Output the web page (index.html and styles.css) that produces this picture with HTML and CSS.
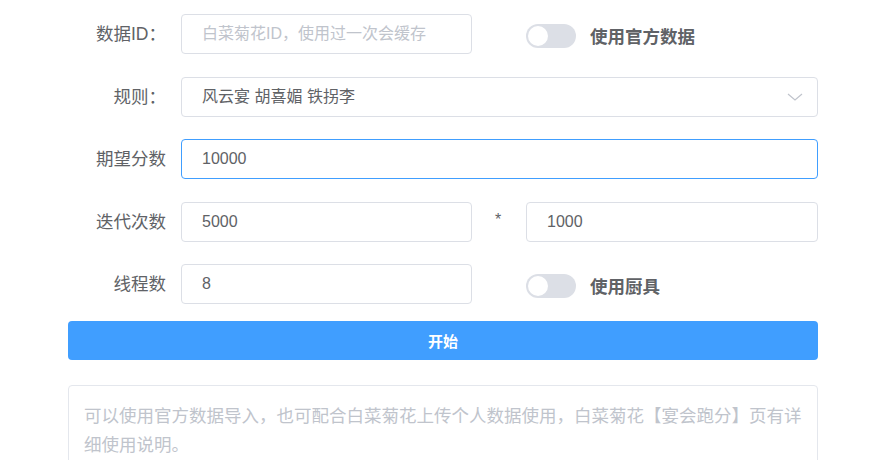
FILE: index.html
```html
<!DOCTYPE html>
<html lang="zh-CN">
<head>
<meta charset="utf-8">
<title>宴会跑分</title>
<link rel="stylesheet" href="styles.css">
</head>
<body>
<div class="page">
  <form class="form">
    <label class="label">数据ID：</label>
    <div class="input placeholder">白菜菊花ID，使用过一次会缓存</div>
    <div class="gap"></div>
    <div class="switch-wrap">
      <span class="switch"><span class="knob"></span></span>
      <span class="switch-label">使用官方数据</span>
    </div>

    <label class="label">规则：</label>
    <div class="input select wide">
      <span>风云宴 胡喜媚 铁拐李</span>
      <svg class="chevron" width="16" height="8" viewBox="0 0 16 8"><path d="M1 1 L8 7 L15 1" fill="none" stroke="#c0c4cc" stroke-width="1.2"/></svg>
    </div>

    <label class="label">期望分数</label>
    <div class="input wide focused">10000</div>

    <label class="label">迭代次数</label>
    <div class="input">5000</div>
    <div class="gap star">*</div>
    <div class="input">1000</div>

    <label class="label">线程数</label>
    <div class="input">8</div>
    <div class="gap"></div>
    <div class="switch-wrap">
      <span class="switch"><span class="knob"></span></span>
      <span class="switch-label">使用厨具</span>
    </div>
  </form>
  <button class="btn" type="button">开始</button>
  <div class="note">可以使用官方数据导入，也可配合白菜菊花上传个人数据使用，白菜菊花【宴会跑分】页有详细使用说明。</div>
</div>
</body>
</html>
```

FILE: styles.css
```css
html, body {
  margin: 0;
  padding: 0;
  background: #ffffff;
  overflow: hidden;
}
body {
  font-family: "Liberation Sans", "Noto Sans CJK SC", sans-serif;
  color: #606266;
}
.page {
  width: 750px;
  padding: 14px 0 0 68px;
}
.form {
  display: grid;
  grid-template-columns: 113px 291px 54px 292px;
  grid-auto-rows: 40px;
  row-gap: 22.5px;
  margin: 0;
}
.label {
  box-sizing: border-box;
  padding-right: 15px;
  text-align: right;
  font-size: 17.5px;
  line-height: 40px;
  color: #606266;
}
.input {
  box-sizing: border-box;
  height: 40px;
  border: 1px solid #dcdfe6;
  border-radius: 4px;
  padding: 0 20px;
  font-size: 16px;
  line-height: 38px;
  color: #606266;
  white-space: nowrap;
  overflow: hidden;
}
.placeholder {
  color: #c0c4cc;
}
.wide {
  grid-column: 2 / 5;
}
.focused {
  border-color: #409eff;
}
.select {
  display: flex;
  align-items: center;
  justify-content: space-between;
  padding-right: 14px;
}
.chevron {
  display: block;
}
.gap {
  display: flex;
  justify-content: center;
}
.star {
  font-size: 16px;
  line-height: 36px;
  color: #606266;
  padding-right: 2px;
}
.switch-wrap {
  display: flex;
  align-items: center;
  padding-top: 3px;
}
.switch {
  box-sizing: border-box;
  width: 50px;
  height: 24px;
  border-radius: 12px;
  background: #dcdfe6;
  padding: 2px;
  display: flex;
}
.knob {
  width: 20px;
  height: 20px;
  border-radius: 50%;
  background: #ffffff;
}
.switch-label {
  margin-left: 14px;
  font-size: 17.5px;
  font-weight: 700;
  color: #606266;
}
.btn {
  display: block;
  box-sizing: border-box;
  width: 750px;
  height: 39px;
  margin-top: 17px;
  border: none;
  border-radius: 4px;
  background: #409eff;
  color: #ffffff;
  font-family: "Liberation Sans", "Noto Sans CJK SC", sans-serif;
  font-size: 15px;
  font-weight: 700;
}
.note {
  box-sizing: border-box;
  margin-top: 25px;
  height: 140px;
  border: 1px solid #e4e7ed;
  border-radius: 4px;
  padding: 16px 10px 15px 15px;
  font-size: 17.5px;
  line-height: 29px;
  color: #c0c4cc;
}
```
